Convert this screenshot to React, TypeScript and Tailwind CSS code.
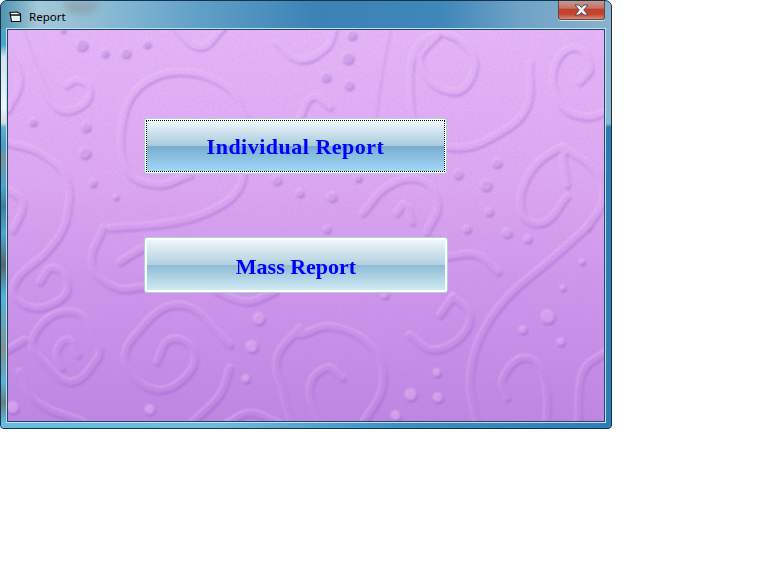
import React from "react";

type P = [number, number];

function unit(a: P, b: P): P {
  const dx = b[0] - a[0];
  const dy = b[1] - a[1];
  const l = Math.hypot(dx, dy) || 1;
  return [dx / l, dy / l];
}

function smooth(pts: P[]): string {
  const k = 0.37;
  let d = `M${pts[0][0]} ${pts[0][1]}`;
  for (let i = 0; i < pts.length - 1; i++) {
    const p0 = pts[i - 1] || pts[i];
    const p1 = pts[i];
    const p2 = pts[i + 1];
    const p3 = pts[i + 2] || p2;
    const len = Math.hypot(p2[0] - p1[0], p2[1] - p1[1]);
    const t1 = unit(p0, p2);
    const t2 = unit(p1, p3);
    const c1x = p1[0] + t1[0] * len * k;
    const c1y = p1[1] + t1[1] * len * k;
    const c2x = p2[0] - t2[0] * len * k;
    const c2y = p2[1] - t2[1] * len * k;
    d += ` C${c1x.toFixed(1)} ${c1y.toFixed(1)} ${c2x.toFixed(1)} ${c2y.toFixed(1)} ${p2[0]} ${p2[1]}`;
  }
  return d;
}

const curves: P[][] = [
  [[20, 28], [37, 73], [57, 108], [80, 107], [90, 90], [77, 80], [67, 85]],
  [[175, 28], [200, 47], [223, 28]],
  [[245, 117], [227, 87], [180, 72], [140, 87], [123, 120], [127, 170], [157, 185], [190, 175]],
  [[245, 150], [240, 187], [213, 210], [170, 223], [110, 228]],
  [[8, 143], [40, 153], [67, 180], [67, 217], [60, 235], [47, 252], [13, 288], [30, 307], [57, 302], [68, 285], [53, 268], [40, 282]],
  [[8, 190], [23, 203], [13, 230]],
  [[8, 50], [20, 80], [8, 110]],
  [[277, 43], [300, 60], [327, 47], [335, 28]],
  [[440, 32], [420, 63], [453, 92], [475, 67], [462, 42], [440, 32]],
  [[530, 63], [527, 107], [500, 133], [457, 148], [420, 130], [410, 90], [417, 47], [440, 32]],
  [[580, 82], [590, 67], [573, 48], [553, 73], [563, 107], [587, 117], [606, 112]],
  [[567, 185], [563, 160], [563, 147], [530, 173], [522, 213], [543, 223], [567, 197]],
  [[563, 147], [597, 173], [602, 203], [587, 227]],
  [[363, 213], [387, 187], [420, 180], [438, 203], [427, 232]],
  [[397, 213], [405, 205], [412, 222]],
  [[300, 117], [313, 97], [330, 107]],
  [[103, 228], [92, 265], [117, 288], [143, 287]],
  [[120, 262], [143, 248]],
  [[100, 348], [73, 312], [33, 338], [50, 368], [73, 382], [98, 358], [100, 348]],
  [[78, 355], [68, 340], [57, 352], [62, 368]],
  [[230, 345], [180, 305], [133, 338], [127, 365], [157, 390], [190, 372], [192, 348], [170, 340], [157, 362]],
  [[20, 372], [37, 402], [83, 422]],
  [[230, 368], [220, 395], [193, 422]],
  [[8, 350], [25, 340]],
  [[217, 292], [247, 302], [275, 292]],
  [[227, 424], [250, 413], [280, 424]],
  [[300, 328], [277, 358], [283, 392], [292, 424]],
  [[590, 225], [553, 258], [507, 298], [480, 338], [470, 382], [477, 424]],
  [[447, 257], [477, 255], [498, 272]],
  [[453, 297], [470, 315], [460, 338], [433, 350], [410, 335]],
  [[440, 315], [453, 297]],
  [[300, 335], [333, 327], [373, 348], [383, 385], [363, 424]],
  [[342, 378], [327, 368], [310, 388], [320, 424]],
  [[507, 398], [503, 378], [527, 358], [545, 382], [547, 424]],
  [[606, 352], [583, 372], [578, 424]],
];

const dots: [number, number, number][] = [
  [82, 45, 6], [105, 53, 4], [126, 53, 5], [147, 44, 4], [63, 30, 3], [33, 122, 4], [86, 127, 5], [85, 153, 6],
  [93, 183, 4], [116, 197, 3], [277, 180, 5], [352, 35, 5], [348, 58, 6], [326, 77, 5], [349, 85, 5], [497, 163, 5],
  [458, 174, 5], [486, 185, 6], [489, 212, 4], [358, 178, 4], [332, 197, 5], [300, 193, 4], [259, 319, 6], [252, 347, 6],
  [246, 379, 4], [150, 410, 5], [13, 408, 6], [507, 233, 5], [528, 239, 4], [467, 229, 4], [582, 262, 3], [563, 288, 3],
  [548, 317, 7], [523, 330, 4], [561, 342, 4], [437, 373, 4], [411, 395, 6], [438, 398, 5], [396, 416, 5], [385, 295, 4], [327, 229, 4],
];

function Paper() {
  const paths = curves.map(smooth);
  return (
    <svg className="absolute inset-0" width="596" height="391" viewBox="8 30 596 391" aria-hidden="true">
      <defs>
        <filter id="grain" x="0" y="0" width="100%" height="100%">
          <feTurbulence type="fractalNoise" baseFrequency="0.5" numOctaves="3" seed="4" />
          <feColorMatrix values="0 0 0 0 0.45  0 0 0 0 0.2  0 0 0 0 0.6  0.9 0 0 0 -0.28" />
        </filter>
        <filter id="soft"><feGaussianBlur stdDeviation="0.8" /></filter>
        <linearGradient id="base" gradientUnits="userSpaceOnUse" x1="0" y1="30" x2="0" y2="421">
          <stop offset="0" stopColor="#e6b7f8" />
          <stop offset="0.4" stopColor="#dda8f2" />
          <stop offset="0.65" stopColor="#cf97ec" />
          <stop offset="1" stopColor="#bf87e4" />
        </linearGradient>
      </defs>
      <g fill="none" strokeLinecap="round" strokeLinejoin="round" filter="url(#soft)">
        <path d="M377 117 C380 90 384 60 392 28" stroke="#a56dd0" strokeOpacity="0.3" strokeWidth="1.5" />
        {paths.map((d, i) => (
          <path key={`d${i}`} d={d} stroke="#8748bd" strokeOpacity="0.42" strokeWidth="6.5" transform="translate(0.8 1.4)" />
        ))}
        {paths.map((d, i) => (
          <path key={`l${i}`} d={d} stroke="#f3d6fb" strokeOpacity="0.45" strokeWidth="6.5" transform="translate(-0.5 -1)" />
        ))}
        {paths.map((d, i) => (
          <path key={`m${i}`} d={d} stroke="url(#base)" strokeWidth="5.5" />
        ))}
      </g>
      <g filter="url(#soft)">
        {dots.map(([x, y, r], i) => (
          <g key={i}>
            <circle cx={x + 0.6} cy={y + 1.2} r={r} fill="#8a4cc0" fillOpacity="0.5" />
            <circle cx={x - 0.5} cy={y - 0.8} r={r - 0.3} fill="#efd0f9" fillOpacity="0.6" />
            <circle cx={x} cy={y} r={Math.max(r - 1.2, 1)} fill="#d4a0ec" fillOpacity="0.85" />
          </g>
        ))}
      </g>
      <rect x="8" y="30" width="596" height="391" filter="url(#grain)" opacity="0.3" />
    </svg>
  );
}

function ReportButton({ label, focused }: { label: string; focused?: boolean }) {
  return (
    <button
      className={
        focused
          ? "flex h-[54px] w-[301px] items-center justify-center rounded-[2px] border-2 border-white bg-[linear-gradient(to_bottom,#eef6fa_0%,#a9cbdc_49%,#78aecd_51%,#a0d7f8_100%)] pt-[1px] outline-1 -outline-offset-2 outline-black outline-dotted shadow-[0_0_0_1px_#a5d3df]"
          : "flex h-[54px] w-[302px] items-center justify-center rounded-[2px] border-2 border-white bg-[linear-gradient(to_bottom,#f0f5f8_0%,#b2d1e1_49%,#8fbdd6_51%,#d0e9f4_100%)] pt-[4px] shadow-[0_0_0_1px_#a5d3df]"
      }
    >
      <span
        className={
          focused
            ? "font-['Liberation_Serif',serif] text-[22px] leading-none font-bold tracking-[0.5px] text-[#0000ff]"
            : "font-['Liberation_Serif',serif] text-[22px] leading-none font-bold text-[#0000ff]"
        }
      >
        {label}
      </span>
    </button>
  );
}

export default function App() {
  return (
    <div className="h-[576px] w-[768px] bg-white">
      <div className="flex h-[429px] w-[612px] flex-col overflow-hidden rounded-t-[7px] rounded-b-[4px] border border-[#12344c] bg-[#2f7db8]">
        <div className="relative flex h-[28px] shrink-0 items-start bg-[linear-gradient(to_right,#4f93b0_0%,#a5c8da_6%,#8dbcd5_16%,#5f9fc7_33%,#3c82b6_52%,#3f86ba_72%,#6fa2c6_85%,#8cb1cc_100%)]">
          <div className="absolute top-0 left-[62px] h-[13px] w-[36px] rounded-b-full bg-[#8a9aa2] opacity-60 blur-[3px]" />
          <div className="relative mt-[9px] ml-[8px] flex items-center">
            <svg width="13" height="12" viewBox="0 0 13 12">
              <path d="M1 1.5 L8 1 L11.5 3 L11.5 10.5 L2.5 10.5 Z" fill="#fff" stroke="#0b0b0b" strokeWidth="1.2" />
              <path d="M1.5 4 H11" stroke="#0b0b0b" strokeWidth="1.4" />
              <path d="M3.5 5.5 H10 V9.5 H3.5 Z" fill="#d8f2fc" />
              <path d="M11.5 10.5 H13 V11.5 H11.5 Z" fill="#888" />
            </svg>
            <span className="ml-[7px] font-['Noto_Sans',sans-serif] text-[11.5px] leading-[14px] text-black">Report</span>
          </div>
          <div className="absolute top-[-1px] right-[6px] flex h-[20px] w-[47px] items-center justify-center rounded-b-[3px] border border-t-0 border-[#5d4a52] bg-[linear-gradient(to_bottom,#c89c92_0%,#c27668_42%,#c3412a_50%,#c5442c_75%,#d98a78_100%)] shadow-[0_1px_0_#d5e3ec]">
            <svg width="17" height="12" viewBox="0 0 17 12">
              <path d="M2 1 H6 L8.5 3.6 L11 1 H15 L10.8 6 L15 11 H11 L8.5 8.4 L6 11 H2 L6.2 6 Z" fill="#f3f4f6" stroke="#4b4b58" strokeWidth="1" />
            </svg>
          </div>
        </div>
        <div className="flex min-h-0 flex-1">
          <div className="w-[6px] shrink-0 bg-[linear-gradient(to_bottom,#4ea4cc_0%,#4ea4cc_4%,#cfe3ec_7%,#eef5f8_20%,#d5dcdc_24%,#5db0d4_25%,#4d9cc2_30%,#7f9296_33%,#4ea5cf_40%,#3e7f99_45%,#4fa6d0_52%,#56686c_60%,#55b2dc_68%,#7f9591_82%,#5ab0d8_90%,#6a7f80_95%,#5fb6de_100%)]" />
          <div className="relative flex flex-1 flex-col border border-[#1c4a68] bg-[linear-gradient(to_bottom,#e6b7f8_0%,#dda8f2_40%,#cf97ec_65%,#bf87e4_100%)] pt-[89px] pl-[137px] shadow-[0_0_0_1px_#bfe0ee]">
            <Paper />
            <div className="relative flex flex-col items-start gap-[65px]">
              <ReportButton label="Individual Report" focused />
              <ReportButton label="Mass Report" />
            </div>
          </div>
          <div className="w-[6px] shrink-0 bg-[linear-gradient(to_bottom,#8bb2cd_0%,#8fb6d0_24%,#2f7ab4_25%,#2f7db8_100%)]" />
        </div>
        <div className="h-[6px] shrink-0 bg-[linear-gradient(to_right,#67bce0_0%,#6dbde0_35%,#3f8fc4_65%,#2f7db8_100%)]" />
      </div>
    </div>
  );
}
